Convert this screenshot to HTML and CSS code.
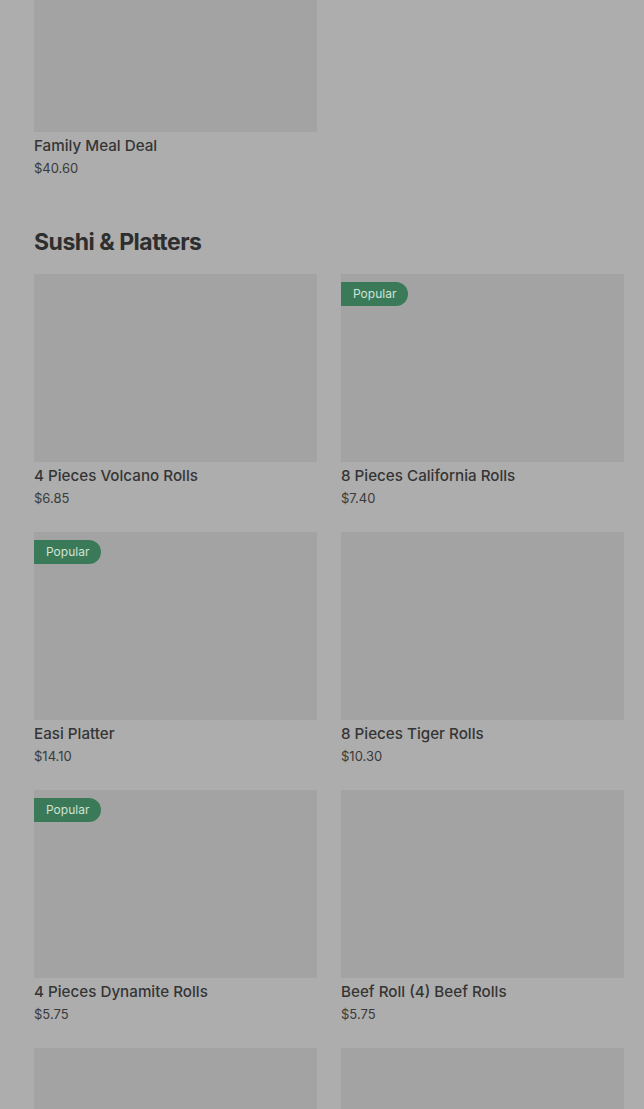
FILE: index.html
```html
<!DOCTYPE html>
<html>
  <head>
    <title>Menu</title>
    <meta name="viewport" content="width=device-width, initial-scale=1.0" />
    <link rel="stylesheet" href="styles.css">
  </head>
  <body>
    <main class="menu">
      <section class="category">
        <div class="grid">
          <div class="item">
            <div class="thumb"></div>
            <p class="name">Family Meal Deal</p>
            <p class="price">$40.60</p>
          </div>
        </div>
      </section>
      <section class="category">
        <h2 class="title">Sushi &amp; Platters</h2>
        <div class="grid">
          <div class="item">
            <div class="thumb"></div>
            <p class="name">4 Pieces Volcano Rolls</p>
            <p class="price">$6.85</p>
          </div>
          <div class="item">
            <div class="thumb"><span class="badge">Popular</span></div>
            <p class="name">8 Pieces California Rolls</p>
            <p class="price">$7.40</p>
          </div>
          <div class="item">
            <div class="thumb"><span class="badge">Popular</span></div>
            <p class="name">Easi Platter</p>
            <p class="price">$14.10</p>
          </div>
          <div class="item">
            <div class="thumb"></div>
            <p class="name">8 Pieces Tiger Rolls</p>
            <p class="price">$10.30</p>
          </div>
          <div class="item">
            <div class="thumb"><span class="badge">Popular</span></div>
            <p class="name">4 Pieces Dynamite Rolls</p>
            <p class="price">$5.75</p>
          </div>
          <div class="item">
            <div class="thumb"></div>
            <p class="name">Beef Roll (4) Beef Rolls</p>
            <p class="price">$5.75</p>
          </div>
          <div class="item">
            <div class="thumb"></div>
          </div>
          <div class="item">
            <div class="thumb"></div>
          </div>
        </div>
      </section>
    </main>
  </body>
</html>
```

FILE: styles.css
```css
body {
  margin: 0;
  height: 1109px;
  overflow: hidden;
  background-color: #adadad;
  font-family: Inter, "Noto Sans", sans-serif;
  color: #333333;
}
.menu {
  margin-top: -56px; /* page is scrolled */
  padding: 0 20px 0 34px;
}
.category {
  margin-bottom: 48px;
}
.title {
  margin: 0 0 16px;
  font-size: 23px;
  font-weight: 700;
  letter-spacing: -0.5px;
  line-height: 32px;
  color: #2e2e2e;
}
.grid {
  display: grid;
  grid-template-columns: repeat(2, 283px);
  column-gap: 24px;
  row-gap: 24px;
}
.thumb {
  position: relative;
  height: 188px;
  background-color: #a3a3a3;
  margin-bottom: 3px;
}
.badge {
  position: absolute;
  top: 8px;
  left: 0;
  height: 24px;
  line-height: 24px;
  padding: 0 12px;
  font-size: 12px;
  color: #cfe3d6;
  background-color: #3b7a58;
  border-radius: 0 12px 12px 0;
}
.name {
  margin: 0;
  font-size: 15.2px;
  font-weight: 500;
  line-height: 22px;
  color: #353535;
}
.price {
  margin: 1px 0 0;
  font-size: 13px;
  line-height: 20px;
  color: #3a3a3a;
}
```
